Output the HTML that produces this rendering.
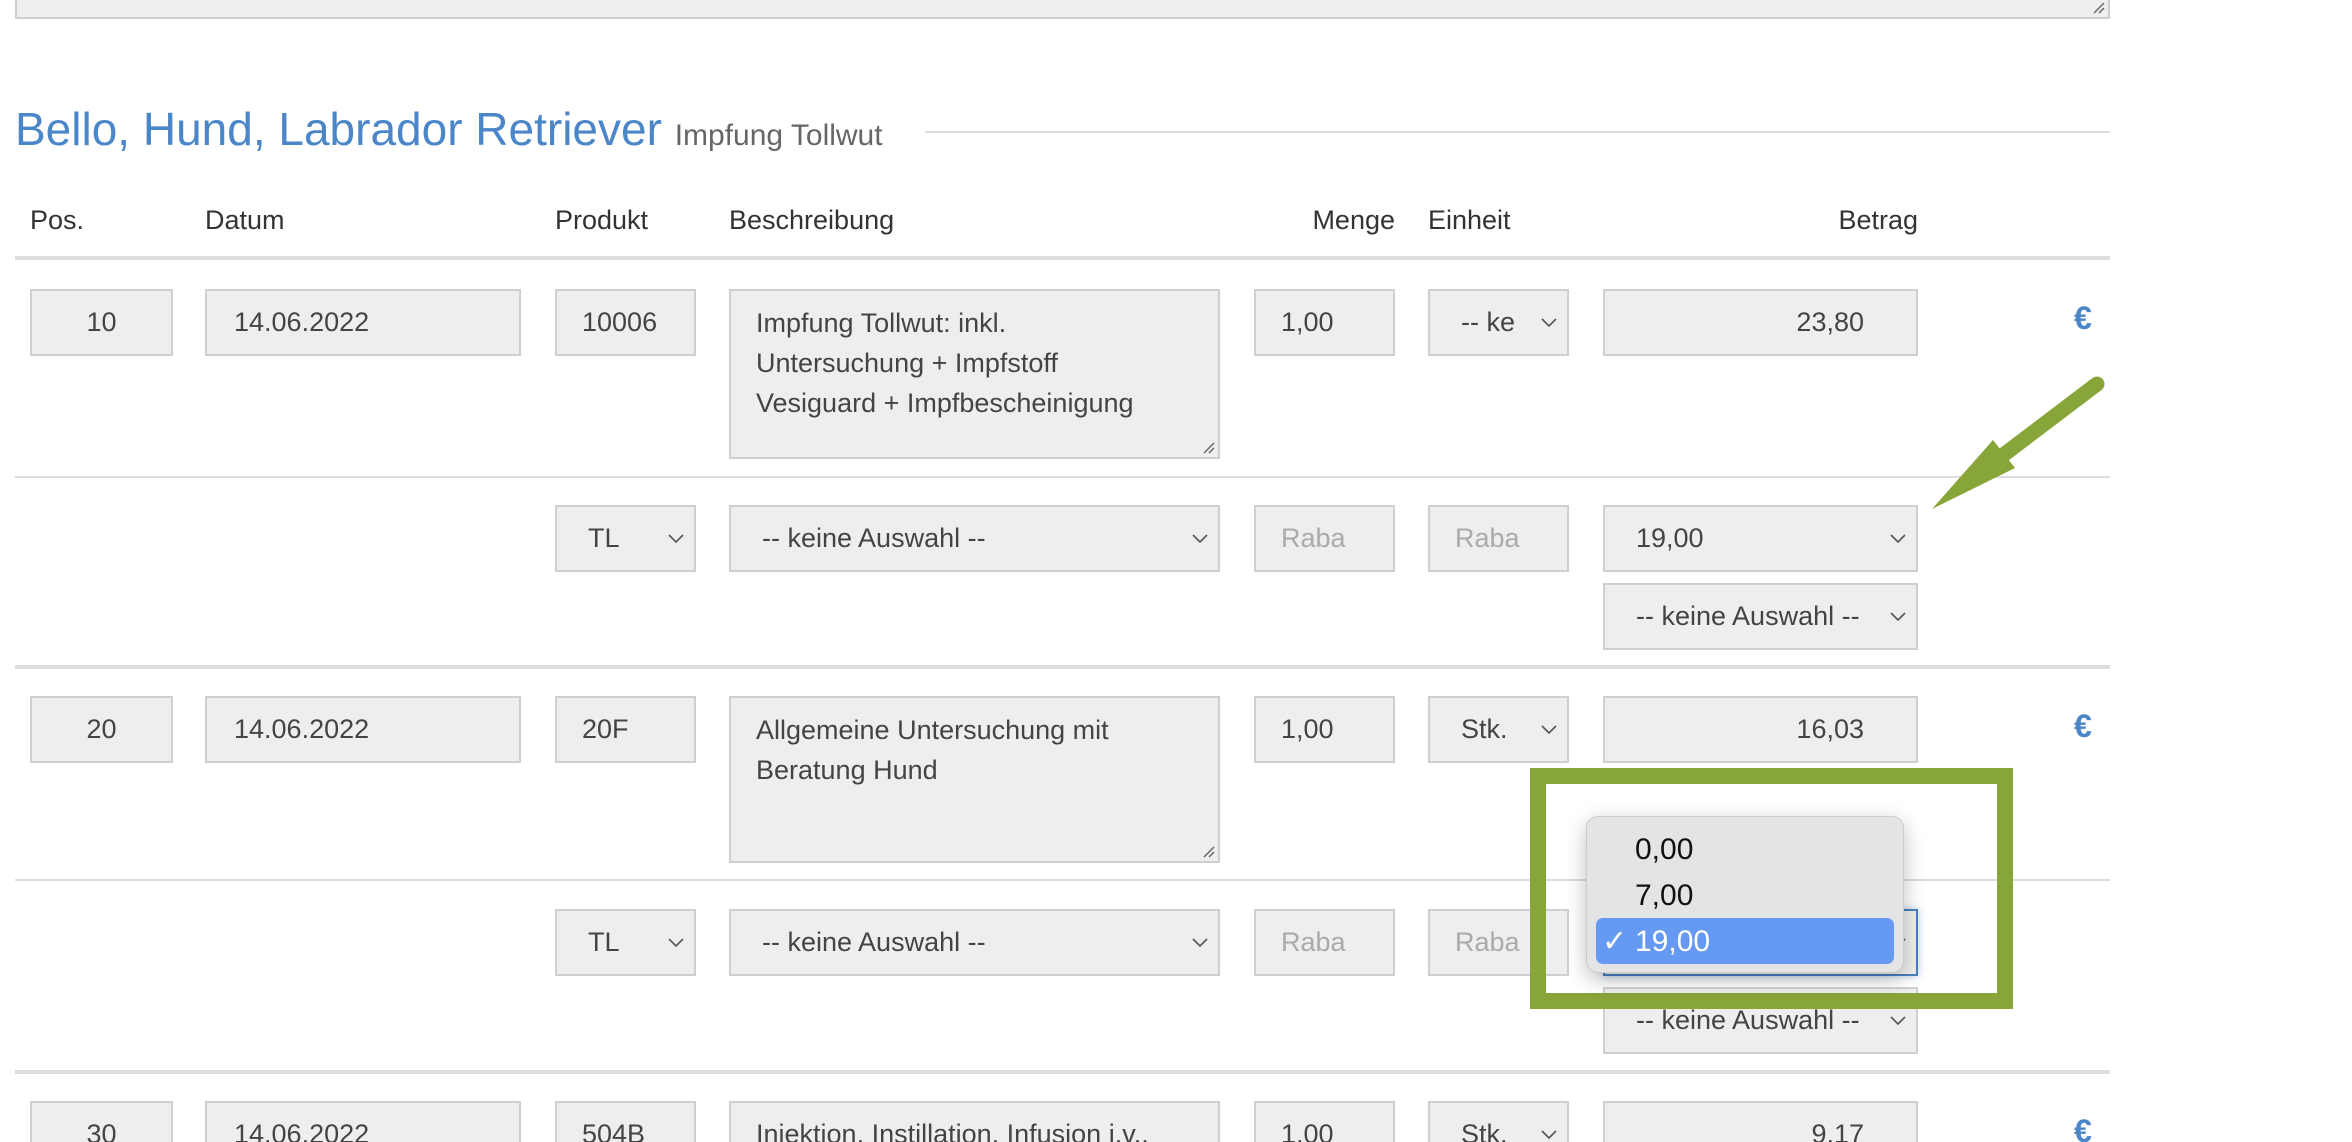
<!DOCTYPE html>
<html style="width:2352px;height:1142px;overflow:hidden"><head><meta charset="utf-8"><style>
*{box-sizing:border-box;margin:0;padding:0}
body{width:2352px;height:1142px;background:#fff;position:relative;overflow:hidden;font-family:"Liberation Sans",Arial,sans-serif;color:#333}
.a{position:absolute}
.in{position:absolute;background:#eee;border:2px solid #cfcfcf;height:67px;font-size:27px;color:#444;line-height:63px;white-space:nowrap;overflow:hidden}
.ph{color:#aaa}
.ta{position:absolute;background:#eee;border:2px solid #cfcfcf;font-size:27px;color:#444;line-height:40px;padding:12px 0 0 25px}
.grip{position:absolute;right:3px;bottom:3px;width:14px;height:14px}
.chev{position:absolute;right:10px;top:27px;width:16px;height:10px}
.hl{position:absolute;height:2px;background:#ddd;left:15px;width:2095px}
.hk{position:absolute;height:4px;background:#ddd;left:15px;width:2095px}
.th{position:absolute;top:205px;font-size:27px;color:#333}
.eur{position:absolute;left:2074px;font-size:32px;font-weight:bold;color:#4a86c8}
</style></head><body>

<div class="a" style="left:15px;top:-10px;width:2095px;height:29px;background:#eee;border:2px solid #cfcfcf">
<svg class="grip" viewBox="0 0 14 14"><path d="M3 13L13 3M8 13L13 8" stroke="#666" stroke-width="1.5"/></svg></div>

<div class="a" style="left:15px;top:102px;font-size:46px;color:#4a86c8;white-space:nowrap">Bello, Hund, Labrador Retriever <span style="font-size:30px;color:#666">Impfung Tollwut</span></div>
<div class="a" style="left:925px;top:131px;width:1185px;height:2px;background:#ddd"></div>

<div class="th" style="left:30px">Pos.</div>
<div class="th" style="left:205px">Datum</div>
<div class="th" style="left:555px">Produkt</div>
<div class="th" style="left:729px">Beschreibung</div>
<div class="th" style="left:1295px;width:100px;text-align:right">Menge</div>
<div class="th" style="left:1428px">Einheit</div>
<div class="th" style="left:1700px;width:218px;text-align:right">Betrag</div>
<div class="hk" style="top:256px"></div>

<!-- Row 1 -->
<div class="in" style="left:30px;top:289px;width:143px;text-align:center">10</div>
<div class="in" style="left:205px;top:289px;width:316px;padding-left:27px">14.06.2022</div>
<div class="in" style="left:555px;top:289px;width:141px;padding-left:25px">10006</div>
<div class="ta" style="left:729px;top:289px;width:491px;height:170px">Impfung Tollwut: inkl.<br>Untersuchung + Impfstoff<br>Vesiguard + Impfbescheinigung<svg class="grip" viewBox="0 0 14 14"><path d="M3 13L13 3M8 13L13 8" stroke="#666" stroke-width="1.5"/></svg></div>
<div class="in" style="left:1254px;top:289px;width:141px;padding-left:25px">1,00</div>
<div class="in" style="left:1428px;top:289px;width:141px;padding-left:31px">-- ke<svg class="chev" viewBox="0 0 16 10"><path d="M1 1L8 8L15 1" fill="none" stroke="#555" stroke-width="1.6"/></svg></div>
<div class="in" style="left:1603px;top:289px;width:315px;text-align:right;padding-right:52px">23,80</div>
<div class="eur" style="top:300px">€</div>
<div class="hl" style="top:476px"></div>

<div class="in" style="left:555px;top:505px;width:141px;padding-left:31px">TL<svg class="chev" viewBox="0 0 16 10"><path d="M1 1L8 8L15 1" fill="none" stroke="#555" stroke-width="1.6"/></svg></div>
<div class="in" style="left:729px;top:505px;width:491px;padding-left:31px">-- keine Auswahl --<svg class="chev" viewBox="0 0 16 10"><path d="M1 1L8 8L15 1" fill="none" stroke="#555" stroke-width="1.6"/></svg></div>
<div class="in ph" style="left:1254px;top:505px;width:141px;padding-left:25px">Raba</div>
<div class="in ph" style="left:1428px;top:505px;width:141px;padding-left:25px">Raba</div>
<div class="in" style="left:1603px;top:505px;width:315px;padding-left:31px">19,00<svg class="chev" viewBox="0 0 16 10"><path d="M1 1L8 8L15 1" fill="none" stroke="#555" stroke-width="1.6"/></svg></div>
<div class="in" style="left:1603px;top:583px;width:315px;padding-left:31px">-- keine Auswahl --<svg class="chev" viewBox="0 0 16 10"><path d="M1 1L8 8L15 1" fill="none" stroke="#555" stroke-width="1.6"/></svg></div>
<div class="hk" style="top:665px"></div>

<!-- Row 2 -->
<div class="in" style="left:30px;top:696px;width:143px;text-align:center">20</div>
<div class="in" style="left:205px;top:696px;width:316px;padding-left:27px">14.06.2022</div>
<div class="in" style="left:555px;top:696px;width:141px;padding-left:25px">20F</div>
<div class="ta" style="left:729px;top:696px;width:491px;height:167px">Allgemeine Untersuchung mit<br>Beratung Hund<svg class="grip" viewBox="0 0 14 14"><path d="M3 13L13 3M8 13L13 8" stroke="#666" stroke-width="1.5"/></svg></div>
<div class="in" style="left:1254px;top:696px;width:141px;padding-left:25px">1,00</div>
<div class="in" style="left:1428px;top:696px;width:141px;padding-left:31px">Stk.<svg class="chev" viewBox="0 0 16 10"><path d="M1 1L8 8L15 1" fill="none" stroke="#555" stroke-width="1.6"/></svg></div>
<div class="in" style="left:1603px;top:696px;width:315px;text-align:right;padding-right:52px">16,03</div>
<div class="eur" style="top:708px">€</div>
<div class="hl" style="top:879px"></div>

<div class="in" style="left:555px;top:909px;width:141px;padding-left:31px">TL<svg class="chev" viewBox="0 0 16 10"><path d="M1 1L8 8L15 1" fill="none" stroke="#555" stroke-width="1.6"/></svg></div>
<div class="in" style="left:729px;top:909px;width:491px;padding-left:31px">-- keine Auswahl --<svg class="chev" viewBox="0 0 16 10"><path d="M1 1L8 8L15 1" fill="none" stroke="#555" stroke-width="1.6"/></svg></div>
<div class="in ph" style="left:1254px;top:909px;width:141px;padding-left:25px">Raba</div>
<div class="in ph" style="left:1428px;top:909px;width:141px;padding-left:25px">Raba</div>
<div class="in" style="left:1603px;top:909px;width:315px;border-color:#4a7fc0;box-shadow:0 0 8px rgba(74,127,192,.4)"><svg class="chev" viewBox="0 0 16 10"><path d="M1 1L8 8L15 1" fill="none" stroke="#555" stroke-width="1.6"/></svg></div>
<div class="in" style="left:1603px;top:987px;width:315px;padding-left:31px">-- keine Auswahl --<svg class="chev" viewBox="0 0 16 10"><path d="M1 1L8 8L15 1" fill="none" stroke="#555" stroke-width="1.6"/></svg></div>
<div class="hk" style="top:1070px"></div>

<!-- Row 3 (clipped) -->
<div class="a" style="left:0;top:1101px;width:2352px;height:41px;overflow:hidden">
<div class="in" style="left:30px;top:0;width:143px;text-align:center">30</div>
<div class="in" style="left:205px;top:0;width:316px;padding-left:27px">14.06.2022</div>
<div class="in" style="left:555px;top:0;width:141px;padding-left:25px">504B</div>
<div class="in" style="left:729px;top:0;width:491px;padding-left:25px">Injektion, Instillation, Infusion i.v.,</div>
<div class="in" style="left:1254px;top:0;width:141px;padding-left:25px">1,00</div>
<div class="in" style="left:1428px;top:0;width:141px;padding-left:31px">Stk.<svg class="chev" viewBox="0 0 16 10"><path d="M1 1L8 8L15 1" fill="none" stroke="#555" stroke-width="1.6"/></svg></div>
<div class="in" style="left:1603px;top:0;width:315px;text-align:right;padding-right:52px">9,17</div>
<div class="eur" style="top:12px">€</div>
</div>

<!-- green box -->
<div class="a" style="left:1530px;top:768px;width:483px;height:241px;border:16px solid #88a53a"></div>

<!-- dropdown menu -->
<div class="a" style="left:1586px;top:816px;width:318px;height:157px;background:#e4e4e4;border:1px solid #ccc;border-radius:12px;box-shadow:0 6px 20px rgba(0,0,0,.25)">
<div class="a" style="left:48px;top:16px;font-size:30px;color:#111">0,00</div>
<div class="a" style="left:48px;top:62px;font-size:30px;color:#111">7,00</div>
<div class="a" style="left:9px;top:101px;width:298px;height:46px;background:#6699f2;border-radius:7px"></div>
<div class="a" style="left:15px;top:107px;font-size:30px;color:#fff">✓</div>
<div class="a" style="left:48px;top:108px;font-size:30px;color:#fff">19,00</div>
</div>

<!-- arrow -->
<svg class="a" style="left:0;top:0" width="2352" height="1142">
<line x1="2097" y1="384" x2="2002" y2="456" stroke="#88a53a" stroke-width="15" stroke-linecap="round"/>
<polygon points="1932,509 1993,440 2015,468" fill="#88a53a"/>
</svg>
</body></html>
